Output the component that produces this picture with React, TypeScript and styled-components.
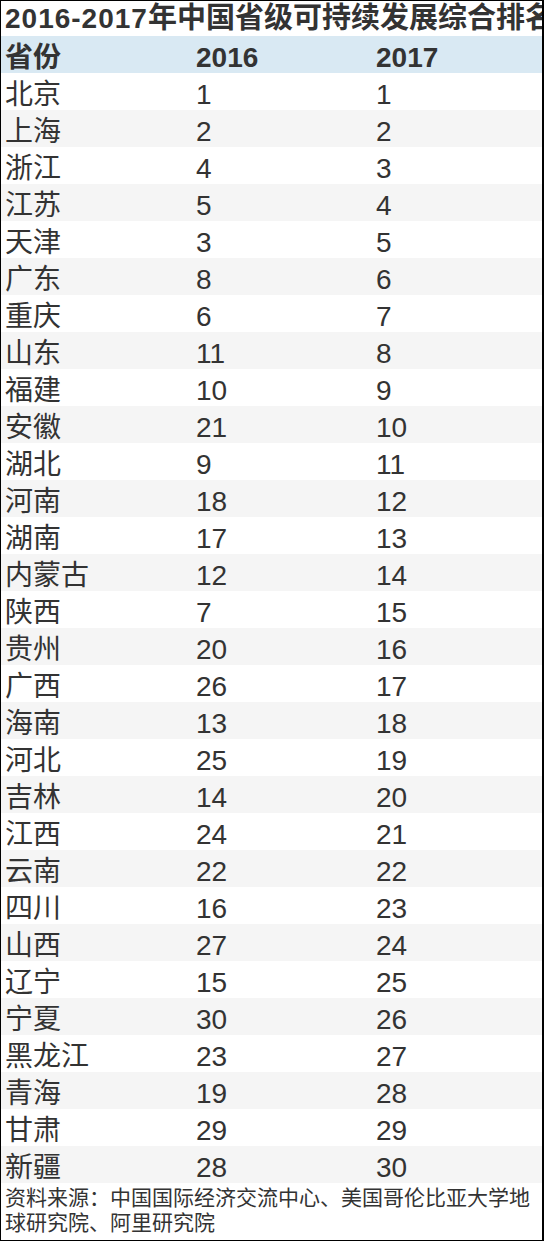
import * as React from 'react';
import styled, { createGlobalStyle } from 'styled-components';

const rows: [string, number, number][] = [
    ['北京', 1, 1],
    ['上海', 2, 2],
    ['浙江', 4, 3],
    ['江苏', 5, 4],
    ['天津', 3, 5],
    ['广东', 8, 6],
    ['重庆', 6, 7],
    ['山东', 11, 8],
    ['福建', 10, 9],
    ['安徽', 21, 10],
    ['湖北', 9, 11],
    ['河南', 18, 12],
    ['湖南', 17, 13],
    ['内蒙古', 12, 14],
    ['陕西', 7, 15],
    ['贵州', 20, 16],
    ['广西', 26, 17],
    ['海南', 13, 18],
    ['河北', 25, 19],
    ['吉林', 14, 20],
    ['江西', 24, 21],
    ['云南', 22, 22],
    ['四川', 16, 23],
    ['山西', 27, 24],
    ['辽宁', 15, 25],
    ['宁夏', 30, 26],
    ['黑龙江', 23, 27],
    ['青海', 19, 28],
    ['甘肃', 29, 29],
    ['新疆', 28, 30],
];

const App = () => (
    <>
        <GlobalStyle />
        <Frame>
            <Title>
                <TitleYears>2016-2017</TitleYears>年中国省级可持续发展综合排名
            </Title>
            <HeadRow>
                <Cell>省份</Cell>
                <Cell>2016</Cell>
                <Cell>2017</Cell>
            </HeadRow>
            {rows.map(([name, a, b], i) => (
                <Row key={name} $shade={i % 2 === 1}>
                    <Cell>{name}</Cell>
                    <Cell>{a}</Cell>
                    <Cell>{b}</Cell>
                </Row>
            ))}
            <Source>
                资料来源：中国国际经济交流中心、美国哥伦比亚大学地球研究院、阿里研究院
            </Source>
        </Frame>
    </>
);

const GlobalStyle = createGlobalStyle`
    body {
        margin: 0;
        background: #fff;
    }
`;

const Frame = styled.div`
    width: 544px;
    height: 1241px;
    box-sizing: border-box;
    border: 1px solid #000;
    border-right-width: 2px;
    overflow: hidden;
    font-family: 'Liberation Sans', 'Noto Sans CJK SC', sans-serif;
    color: #333;
    background: #fff;
`;

const Title = styled.div`
    height: 35px;
    line-height: 35px;
    padding-left: 4px;
    white-space: nowrap;
    overflow: hidden;
    font-size: 29px;
    font-weight: 700;
    color: #333;
`;

const TitleYears = styled.span`
    font-size: 28px;
    letter-spacing: 1px;
`;

const Row = styled.div<{ $shade?: boolean }>`
    display: grid;
    grid-template-columns: 191px 180px 1fr;
    height: 37px;
    line-height: 37px;
    padding-top: 3px;
    box-sizing: border-box;
    padding-left: 4px;
    font-size: 28px;
    background: ${(p) => (p.$shade ? '#f5f5f5' : '#fff')};
`;

const HeadRow = styled(Row)`
    font-weight: 700;
    background: #d9e9f3;
`;

const Cell = styled.div`
    white-space: nowrap;
`;

const Source = styled.div`
    padding: 2px 0 0 4px;
    font-size: 21px;
    line-height: 25px;
    color: #333;
`;

export default App;
